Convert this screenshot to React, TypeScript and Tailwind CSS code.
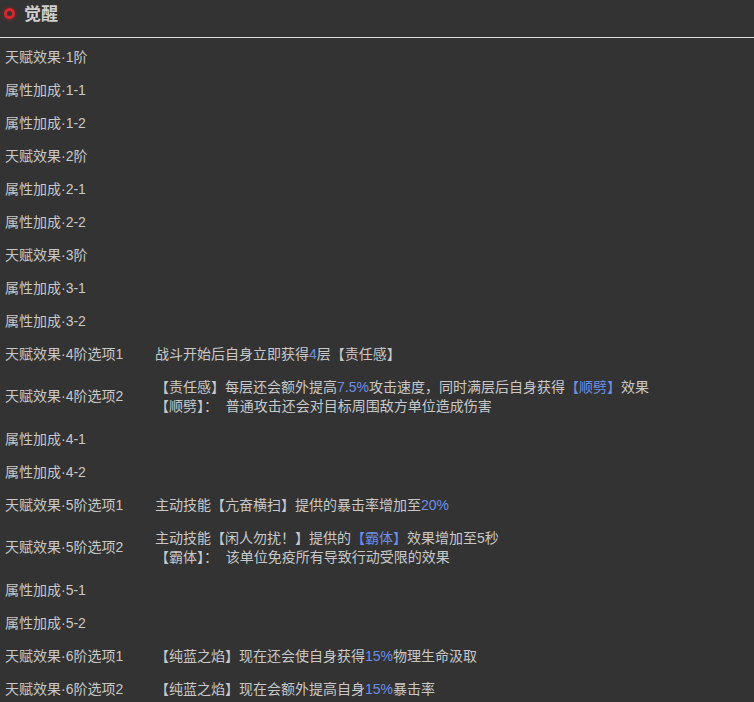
const CJK = "font-['Liberation_Sans','Noto_Sans_CJK_SC',sans-serif]";

const hi = (text: string) => <span className="text-[#6b8fe6]">{text}</span>;

const ROWS: { label: string; lines?: React.ReactNode[] }[] = [
  { label: '天赋效果·1阶' },
  { label: '属性加成·1-1' },
  { label: '属性加成·1-2' },
  { label: '天赋效果·2阶' },
  { label: '属性加成·2-1' },
  { label: '属性加成·2-2' },
  { label: '天赋效果·3阶' },
  { label: '属性加成·3-1' },
  { label: '属性加成·3-2' },
  { label: '天赋效果·4阶选项1', lines: [<>战斗开始后自身立即获得{hi('4')}层【责任感】</>] },
  {
    label: '天赋效果·4阶选项2',
    lines: [
      <>【责任感】每层还会额外提高{hi('7.5%')}攻击速度，同时满层后自身获得{hi('【顺劈】')}效果</>,
      <>【顺劈】：&nbsp;&nbsp;普通攻击还会对目标周围敌方单位造成伤害</>,
    ],
  },
  { label: '属性加成·4-1' },
  { label: '属性加成·4-2' },
  { label: '天赋效果·5阶选项1', lines: [<>主动技能【亢奋横扫】提供的暴击率增加至{hi('20%')}</>] },
  {
    label: '天赋效果·5阶选项2',
    lines: [
      <>主动技能【闲人勿扰！】提供的{hi('【霸体】')}效果增加至5秒</>,
      <>【霸体】：&nbsp;&nbsp;该单位免疫所有导致行动受限的效果</>,
    ],
  },
  { label: '属性加成·5-1' },
  { label: '属性加成·5-2' },
  { label: '天赋效果·6阶选项1', lines: [<>【纯蓝之焰】现在还会使自身获得{hi('15%')}物理生命汲取</>] },
  { label: '天赋效果·6阶选项2', lines: [<>【纯蓝之焰】现在会额外提高自身{hi('15%')}暴击率</>] },
];

export default function App() {
  return (
    <div className={`h-[702px] w-[754px] overflow-hidden bg-[#333333] text-[14px] leading-[19px] text-[#c8c8c8] ${CJK}`}>
      <div className="flex h-[38px] items-start border-b border-[#dcdcdc] pl-[3px] pt-[4px]">
        <span className="mt-[2px] flex h-[15px] w-[12px] items-center justify-center">
          <span className="h-[11px] w-[11px] rounded-full border-[3px] border-[#d8262c] shadow-[0_0_4px_#a02025]" />
        </span>
        <h2 className="ml-[9px] text-[17px] font-bold leading-[22px] text-[#d0d0d0]">觉醒</h2>
      </div>
      <div className="flex flex-col pt-[3px]">
        {ROWS.map((row) => (
          <div key={row.label} className="flex items-center py-[7px]">
            <div className={`w-[155px] shrink-0 pl-[5px] ${row.lines?.length === 2 ? 'pb-[2px]' : ''}`}>{row.label}</div>
            {row.lines && (
              <div>
                {row.lines.map((line, i) => (
                  <div key={i}>{line}</div>
                ))}
              </div>
            )}
            {!row.lines && <div className="h-[19px]" />}
          </div>
        ))}
      </div>
    </div>
  );
}
